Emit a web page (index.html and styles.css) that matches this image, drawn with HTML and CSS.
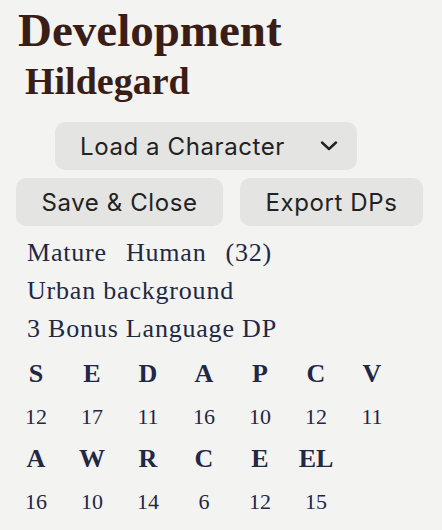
FILE: index.html
```html
<!DOCTYPE html>
<html>
<head>
<meta charset="utf-8">
<link rel="stylesheet" href="styles.css">
</head>
<body>
<h1 class="title">Development</h1>
<h2 class="name">Hildegard</h2>
<div class="select-row">
  <div class="select">
    <span>Load a Character</span>
    <svg class="chev" width="18" height="10" viewBox="0 0 18 10"><path d="M2 1.5 L9 8 L16 1.5" fill="none" stroke="#222" stroke-width="2.4" stroke-linecap="round" stroke-linejoin="round"/></svg>
  </div>
</div>
<div class="btn-row">
  <button class="btn btn-save">Save &amp; Close</button>
  <button class="btn btn-export">Export DPs</button>
</div>
<div class="info">
  <div class="line"><span class="item">Mature</span><span class="item">Human</span><span class="item">(32)</span></div>
  <div class="line">Urban background</div>
  <div class="line">3 Bonus Language DP</div>
</div>
<div class="stats">
  <div class="h">S</div><div class="h">E</div><div class="h">D</div><div class="h">A</div><div class="h">P</div><div class="h">C</div><div class="h">V</div>
  <div class="v">12</div><div class="v">17</div><div class="v">11</div><div class="v">16</div><div class="v">10</div><div class="v">12</div><div class="v">11</div>
</div>
<div class="stats stats-2">
  <div class="h">A</div><div class="h">W</div><div class="h">R</div><div class="h">C</div><div class="h">E</div><div class="h">EL</div><div class="h"></div>
  <div class="v">16</div><div class="v">10</div><div class="v">14</div><div class="v">6</div><div class="v">12</div><div class="v">15</div><div class="v"></div>
</div>
</body>
</html>
```
FILE: styles.css
```css
html, body {
  margin: 0;
  padding: 0;
  background: #f3f3f2;
}
body {
  width: 442px;
  height: 530px;
  overflow: hidden;
}
.title {
  margin: 0;
  padding: 6px 0 0 18px;
  font-family: "Liberation Serif", serif;
  font-weight: bold;
  font-size: 47px;
  line-height: 48px;
  color: #3a1d16;
}
.name {
  margin: 7px 0 0 0;
  padding-left: 25px;
  font-family: "Liberation Serif", serif;
  font-weight: bold;
  font-size: 38px;
  line-height: 40px;
  color: #3a1d16;
}
.select-row {
  display: flex;
  padding-left: 55px;
  margin-top: 21px;
}
.select {
  width: 302px;
  height: 48px;
  box-sizing: border-box;
  background: #e4e4e3;
  border-radius: 10px;
  display: flex;
  align-items: center;
  justify-content: space-between;
  padding: 0 19px 0 25px;
  font-family: Inter, "Noto Sans", sans-serif;
  font-size: 24px;
  letter-spacing: 0.6px;
  color: #222;
}
.chev {
  display: block;
}
.btn-row {
  display: flex;
  gap: 17px;
  padding-left: 16px;
  margin-top: 8px;
}
.btn {
  height: 48px;
  border: none;
  border-radius: 10px;
  background: #e4e4e3;
  font-family: Inter, "Noto Sans", sans-serif;
  font-size: 24px;
  letter-spacing: 0.6px;
  color: #222;
  padding: 0;
}
.btn-save { width: 207px; }
.btn-export { width: 183px; }
.info {
  margin-top: 8px;
  padding-left: 27px;
  font-family: "Liberation Serif", serif;
  font-size: 26px;
  letter-spacing: 0.8px;
  line-height: 38px;
  color: #1f2844;
}
.line {
  display: flex;
  gap: 19px;
}
.stats {
  display: grid;
  grid-template-columns: repeat(7, 56px);
  row-gap: 13px;
  padding-left: 8px;
  margin-top: 11px;
  color: #1f2844;
  font-family: "Liberation Serif", serif;
  text-align: center;
}
.stats-2 {
  margin-top: 12px;
}
.h {
  font-weight: bold;
  font-size: 26px;
  line-height: 30px;
}
.v {
  font-size: 22px;
  line-height: 30px;
}
```
